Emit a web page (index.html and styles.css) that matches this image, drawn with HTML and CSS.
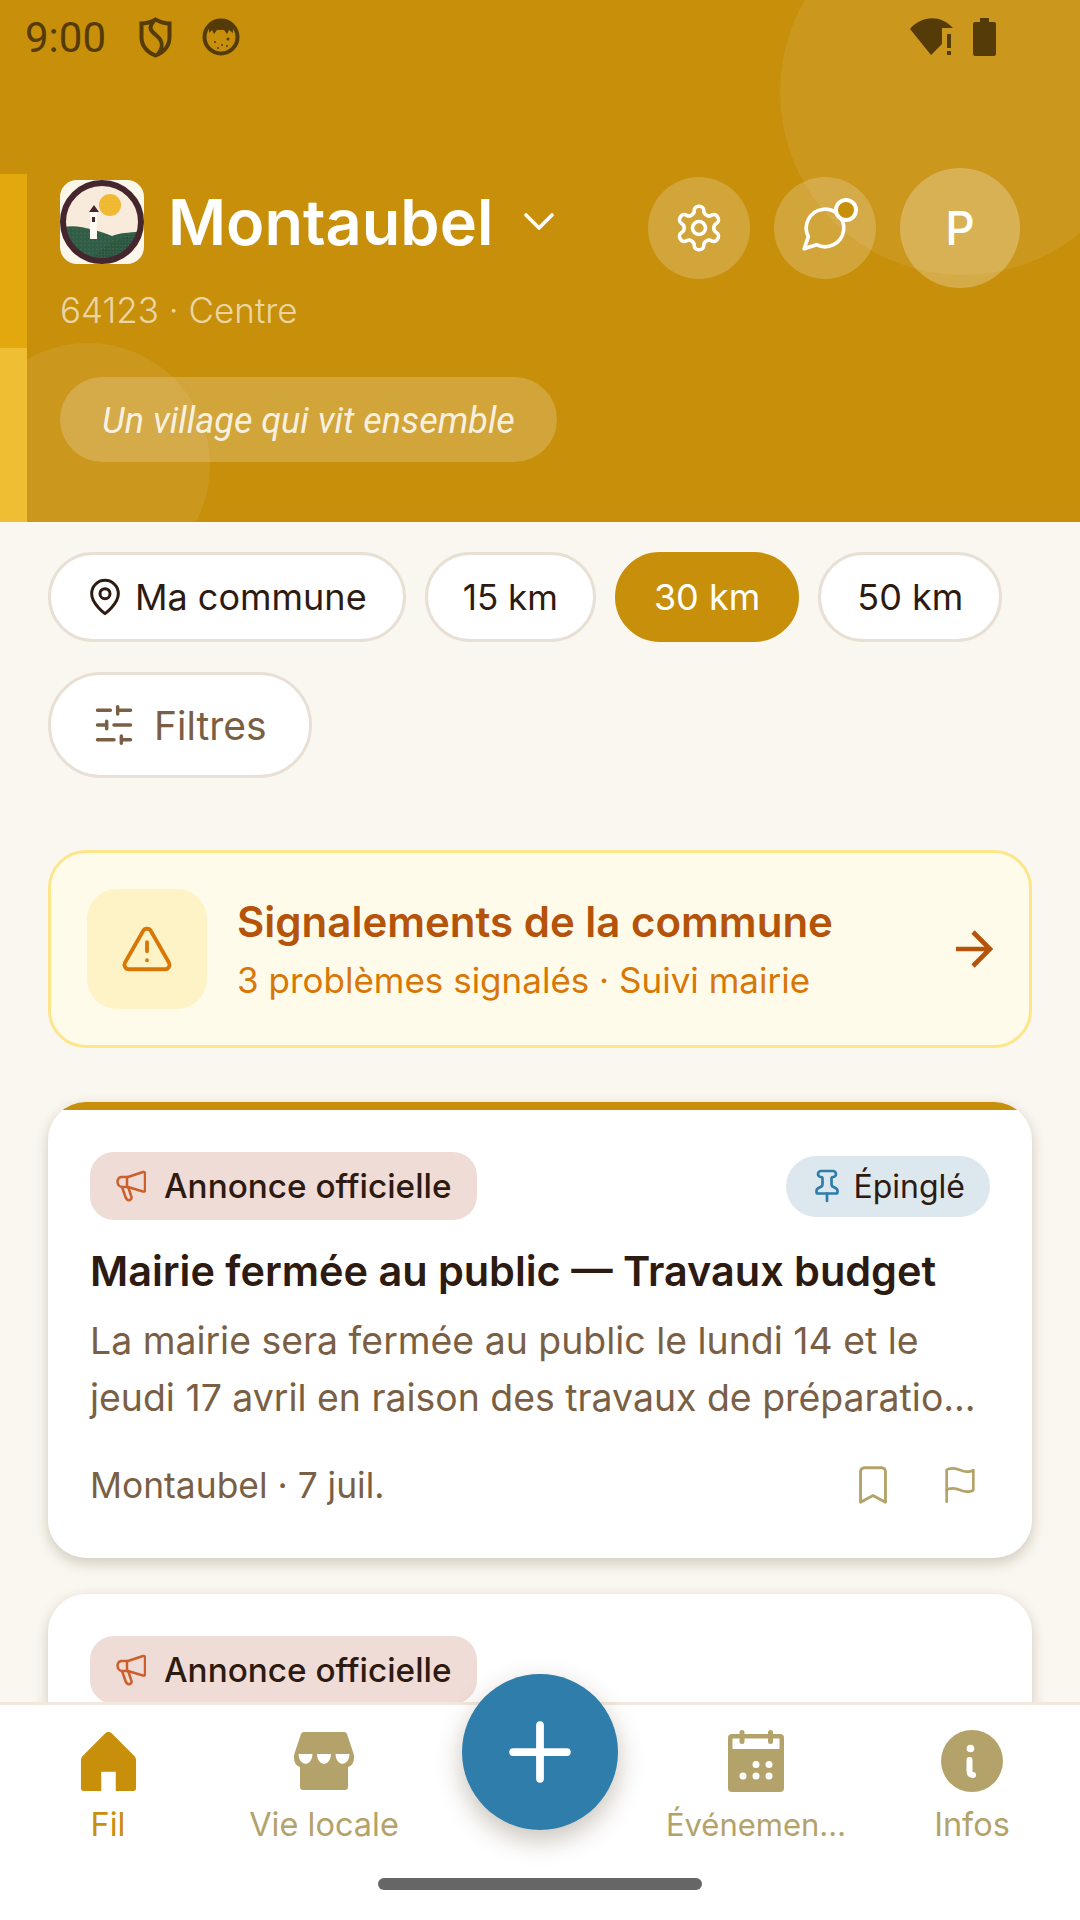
FILE: index.html
```html
<!DOCTYPE html>
<html lang="fr">
<head>
<meta charset="utf-8">
<title>Montaubel</title>
<link rel="stylesheet" href="styles.css">
</head>
<body>
<div class="screen">
  <header class="header">
    <div class="blob blob-top"></div>
    <div class="blob blob-bottom"></div>
    <div class="stripes"><div class="stripe-a"></div><div class="stripe-b"></div></div>
    <div class="status">
      <span class="clock">9:00</span>
      <svg class="st-shield" viewBox="0 0 33 41"><path class="st-line" d="M16.5 2.5 C21 5 26 6.500 30.500 6.500 V20 C30.500 29 25 35 16.500 38.500 C8 35 2.500 29 2.500 20 V6.500 C7 6.500 12 5 16.500 2.500 Z"/><path class="st-line" d="M15 4 C8 11 13 15 18 19 C24 24 24 31 19 37"/></svg>
      <svg class="st-face" viewBox="0 0 38 38"><circle class="st-line" cx="19" cy="19" r="16.500"/><path class="st-fill" d="M7 8 C12 1 26 1 31 8 L31 15 L27 12 L25 16 L22 12 H15 L12 16 L10 12 L7 15 Z"/><circle class="st-fill" cx="13" cy="24" r="1"/><circle class="st-fill" cx="20" cy="27" r="1"/><circle class="st-fill" cx="26" cy="21" r="1.500"/><circle class="st-fill" cx="16" cy="30" r="1"/><circle class="st-fill" cx="25" cy="28" r="1"/></svg>
      <span class="status-gap"></span>
      <svg class="st-wifi" viewBox="0 0 43 38"><path class="st-fill" d="M0 11 C12 -3 31 -3 43 10 H32 V26 L21 37 Z"/><rect class="st-fill" x="37" y="16" width="4" height="14"/><rect class="st-fill" x="37" y="33" width="4" height="4"/></svg>
      <svg class="st-batt" viewBox="0 0 23 38"><path class="st-fill" d="M7 0 H16 V4 H21 Q23 4 23 6 V36 Q23 38 21 38 H2 Q0 38 0 36 V6 Q0 4 2 4 H7 Z"/></svg>
    </div>
    <div class="head-main">
      <div class="head-left">
        <div class="title-row">
          <svg class="logo" viewBox="0 0 84 84">
            <defs>
              <clipPath id="lc"><circle cx="42" cy="42" r="38"/></clipPath>
              <pattern id="dotsA" width="4" height="4" patternUnits="userSpaceOnUse"><circle cx="1" cy="1" r=".5" fill="#8a6a5a"/></pattern>
              <pattern id="dotsB" width="3" height="3" patternUnits="userSpaceOnUse"><circle cx="1" cy="1" r=".6" fill="#15261d"/></pattern>
              <pattern id="dotsC" width="3" height="3" patternUnits="userSpaceOnUse"><circle cx="1" cy="1" r=".4" fill="#d99a3a"/></pattern>
            </defs>
            <rect class="logo-bg" width="84" height="84" rx="17"/>
            <circle class="logo-sky" cx="42" cy="42" r="39"/>
            <g clip-path="url(#lc)">
              <path class="logo-hill" d="M0 48 C10 45 20 46 34 50 C42 52 47 54 52 56 C60 53 70 52 84 52 V84 H0 Z"/>
              <path class="logo-dots-a" d="M0 48 C10 45 20 46 34 50 C42 52 47 54 52 56 C60 53 70 52 84 52 V84 H0 Z"/>
              <path class="logo-dots-b" d="M34 78 C40 66 58 58 84 52 V84 H34 Z"/>
            </g>
            <circle class="logo-sun" cx="50" cy="25" r="11"/>
            <circle class="logo-sun-dots" cx="50" cy="25" r="11"/>
            <rect class="logo-tower" x="30" y="32" width="7" height="27"/>
            <path class="logo-dark" d="M34 25 L39 32 H29 Z"/>
            <rect class="logo-dark" x="32" y="37" width="3" height="5"/>
            <circle class="logo-ring" cx="42" cy="42" r="39"/>
          </svg>
          <h1 class="town">Montaubel</h1>
          <svg class="chevron" viewBox="0 0 32 22"><path d="M3 4 L16 17 L29 4"/></svg>
        </div>
        <div class="postal">64123 · Centre</div>
        <div class="tagline">Un village qui vit ensemble</div>
      </div>
      <div class="actions">
        <div class="round-btn">
          <svg class="ic-white ic-gear" viewBox="0 0 24 24"><path d="M12.220 2h-.44a2 2 0 0 0-2 2v.18a2 2 0 0 1-1 1.730l-.43.25a2 2 0 0 1-2 0l-.15-.08a2 2 0 0 0-2.730.73l-.22.38a2 2 0 0 0 .73 2.730l.15.1a2 2 0 0 1 1 1.720v.51a2 2 0 0 1-1 1.740l-.15.09a2 2 0 0 0-.73 2.730l.22.38a2 2 0 0 0 2.730.73l.15-.08a2 2 0 0 1 2 0l.43.25a2 2 0 0 1 1 1.730V20a2 2 0 0 0 2 2h.44a2 2 0 0 0 2-2v-.18a2 2 0 0 1 1-1.730l.43-.25a2 2 0 0 1 2 0l.15.08a2 2 0 0 0 2.730-.73l.22-.39a2 2 0 0 0-.73-2.730l-.15-.08a2 2 0 0 1-1-1.740v-.5a2 2 0 0 1 1-1.740l.15-.09a2 2 0 0 0 .73-2.730l-.22-.38a2 2 0 0 0-2.730-.73l-.15.08a2 2 0 0 1-2 0l-.43-.25a2 2 0 0 1-1-1.730V4a2 2 0 0 0-2-2z"/><circle cx="12" cy="12" r="3"/></svg>
        </div>
        <div class="round-btn">
          <svg class="ic-white ic-chat" viewBox="0 0 24 24"><path d="M7.900 20A9 9 0 1 0 4 16.100L2 22Z"/></svg>
          <span class="notif"></span>
        </div>
        <div class="avatar">P</div>
      </div>
    </div>
  </header>

  <main class="content">
    <div class="chips">
      <div class="chip chip-place">
        <svg class="ic-pin" viewBox="0 0 24 24"><path d="M20 10c0 6-8 12-8 12s-8-6-8-12a8 8 0 0 1 16 0Z"/><circle cx="12" cy="10" r="3"/></svg>
        Ma commune
      </div>
      <div class="chip chip-near">15 km</div>
      <div class="chip chip-on">30 km</div>
      <div class="chip">50 km</div>
      <div class="chip chip-filter">
        <svg class="ic-sliders" viewBox="0 0 24 24"><path d="M21 4h-7M10 4H3M21 12h-9M8 12H3M21 20h-5M12 20H3M14 2v4M8 10v4M16 18v4"/></svg>
        Filtres
      </div>
    </div>

    <section class="alert">
      <div class="alert-icon">
        <svg class="ic-warn" viewBox="0 0 24 24"><path d="m21.730 18-8-14a2 2 0 0 0-3.480 0l-8 14A2 2 0 0 0 4 21h16a2 2 0 0 0 1.730-3"/><path d="M12 9v4M12 17h.01"/></svg>
      </div>
      <div class="alert-text">
        <div class="alert-title">Signalements de la commune</div>
        <div class="alert-sub">3 problèmes signalés · Suivi mairie</div>
      </div>
      <svg class="ic-arrow" viewBox="0 0 24 24"><path d="M3 12h17M11.500 3.500L20 12l-8.500 8.500"/></svg>
    </section>

    <article class="card">
      <div class="card-band"></div>
      <div class="card-body">
        <div class="tags">
          <div class="tag">
            <svg class="ic-mega" viewBox="0 0 30 32"><path d="M5 7 H12 L27 2 Q29 1.500 29 3.500 V20 Q29 22 27 21.500 L12 17 H7 Q2 17 1.500 12 Q1.500 8 5 7 Z"/><path d="M11 7 V17"/><path d="M6 17 L9.500 27 Q11 31 14 30 Q16.500 28.500 15 25.500 L12.500 18"/></svg>
            Annonce officielle
          </div>
          <div class="pinned">
            <svg class="ic-tack" viewBox="0 0 24 24"><path d="M12 17v5"/><path d="M9 10.760a2 2 0 0 1-1.110 1.790l-1.780.9A2 2 0 0 0 5 15.240V16a1 1 0 0 0 1 1h12a1 1 0 0 0 1-1v-.76a2 2 0 0 0-1.110-1.790l-1.780-.9A2 2 0 0 1 15 10.760V7a1 1 0 0 1 1-1 2 2 0 0 0 0-4H8a2 2 0 0 0 0 4 1 1 0 0 1 1 1z"/></svg>
            Épinglé
          </div>
        </div>
        <h2 class="post-title">Mairie fermée au public — Travaux budget</h2>
        <p class="post-text">La mairie sera fermée au public le lundi 14 et le jeudi 17 avril en raison des travaux de préparatio…</p>
        <div class="post-foot">
          <span class="post-meta">Montaubel · 7 juil.</span>
          <div class="post-actions">
            <svg class="ic-bookmark" viewBox="0 0 24 24"><path d="M18.500 21l-6.500-3.500L5.500 21V5a2 2 0 0 1 2-2h9a2 2 0 0 1 2 2z"/></svg>
            <svg class="ic-flag" viewBox="0 0 24 24"><path d="M4 15s1-1 4-1 5 2 8 2 4-1 4-1V3s-1 1-4 1-5-2-8-2-4 1-4 1z"/><path d="M4 22v-7"/></svg>
          </div>
        </div>
      </div>
    </article>

    <article class="card card-next">
      <div class="card-body">
        <div class="tags">
          <div class="tag">
            <svg class="ic-mega" viewBox="0 0 30 32"><path d="M5 7 H12 L27 2 Q29 1.500 29 3.500 V20 Q29 22 27 21.500 L12 17 H7 Q2 17 1.500 12 Q1.500 8 5 7 Z"/><path d="M11 7 V17"/><path d="M6 17 L9.500 27 Q11 31 14 30 Q16.500 28.500 15 25.500 L12.500 18"/></svg>
            Annonce officielle
          </div>
        </div>
      </div>
    </article>
  </main>

  <nav class="nav">
    <div class="nav-item nav-on">
      <div class="nav-icon"><svg class="i-home" viewBox="0 0 57 61"><path d="M28.500 0 Q26.500 0 25 1.500 L1.500 25 Q0 26.500 0 29 V58 Q0 61 3 61 H21 V41 H36 V61 H54 Q57 61 57 58 V29 Q57 26.500 55.500 25 L32 1.500 Q30.500 0 28.500 0 Z"/></svg></div>
      <span class="nav-label">Fil</span>
    </div>
    <div class="nav-item">
      <div class="nav-icon"><svg class="i-store" viewBox="0 0 60 58"><path class="fill-muted" d="M7 2 Q7.500 0 10 0 H50 Q52.500 0 53 2 L60 23 V26 Q60 33 54 35 V55 Q54 58 51 58 H9 Q6 58 6 55 V35 Q0 33 0 26 V23 Z"/><path class="fill-white" d="M4.500 22 H18.500 A7 10 0 0 1 4.500 22 Z"/><path class="fill-white" d="M23 22 H37 A7 10 0 0 1 23 22 Z"/><path class="fill-white" d="M41.500 22 H55.500 A7 10 0 0 1 41.500 22 Z"/></svg></div>
      <span class="nav-label">Vie locale</span>
    </div>
    <div class="nav-item"></div>
    <div class="nav-item">
      <div class="nav-icon"><svg class="i-cal" viewBox="0 0 56 62"><rect class="fill-muted" y="4" width="56" height="58" rx="4"/><rect class="fill-white" x="4.500" y="8.500" width="47" height="10.500"/><rect class="fill-muted" x="11.500" width="5" height="14" rx="2.500"/><rect class="fill-muted" x="40" width="5" height="14" rx="2.500"/><circle class="fill-white" cx="28" cy="34.500" r="3.500"/><circle class="fill-white" cx="41" cy="34.500" r="3.500"/><circle class="fill-white" cx="15" cy="46" r="3.500"/><circle class="fill-white" cx="28" cy="46" r="3.500"/><circle class="fill-white" cx="41" cy="46" r="3.500"/></svg></div>
      <span class="nav-label nav-long">Événemen…</span>
    </div>
    <div class="nav-item">
      <div class="nav-icon"><svg class="i-info" viewBox="0 0 62 62"><circle class="fill-muted" cx="31" cy="31" r="31"/><circle class="fill-white" cx="29.500" cy="18.500" r="3.800"/><path class="stroke-white" d="M28.500 30 V41 Q28.500 45 32 45"/></svg></div>
      <span class="nav-label">Infos</span>
    </div>
  </nav>
  <div class="fab"><svg class="i-plus" viewBox="0 0 60 60"><path d="M30 4 V56 M4 30 H56"/></svg></div>
  <div class="home-bar"></div>
</div>
</body>
</html>
```

FILE: styles.css
```css
* { box-sizing: border-box; }
html, body { margin: 0; padding: 0; }
body { background: #faf7f0; font-family: "Inter", "Liberation Sans", sans-serif; color: #2d1a10; }
.screen { position: relative; width: 1080px; height: 1920px; overflow: hidden; background: #faf7f0; }

/* header */
.header { position: relative; height: 522px; background: #c78f0a; overflow: hidden; }
.blob { position: absolute; border-radius: 50%; background: rgba(255,255,255,.08); }
.blob-top { left: 780px; top: -91px; width: 366px; height: 366px; }
.blob-bottom { left: -34px; top: 343px; width: 244px; height: 244px; }
.stripes { position: absolute; left: 0; top: 174px; width: 27px; height: 348px; display: flex; flex-direction: column; }
.stripe-a { flex: 1; background: #e2a80e; }
.stripe-b { flex: 1; background: #f0be32; }

.status { position: relative; display: flex; align-items: center; height: 74px; padding: 0 84px 0 25px; }
.clock { font-family: "Roboto", sans-serif; font-size: 42px; color: #553b08; width: 114px; }
.status-gap { flex: 1; }
.st-line { fill: none; stroke: #553b08; stroke-width: 4; }
.st-fill { fill: #553b08; }
.st-shield { width: 33px; height: 41px; margin-right: 30px; }
.st-face { width: 38px; height: 38px; }
.st-wifi { width: 43px; height: 38px; margin-right: 20px; }
.st-batt { width: 23px; height: 38px; }

.head-main { position: relative; display: flex; justify-content: space-between; padding: 94px 60px 0; }
.head-left { padding-top: 12px; }
.title-row { display: flex; align-items: center; height: 84px; }
.logo { width: 84px; height: 84px; margin-right: 24px; }
.logo-bg { fill: #fbf6ea; }
.logo-sky { fill: #f8ebdc; }
.logo-hill { fill: #2f5e46; }
.logo-dots-a { fill: url(#dotsA); }
.logo-dots-b { fill: url(#dotsB); }
.logo-sun { fill: #f0bb33; }
.logo-sun-dots { fill: url(#dotsC); }
.logo-tower { fill: #fdfaf3; }
.logo-dark { fill: #45262f; }
.logo-ring { fill: none; stroke: #45262f; stroke-width: 6; }
.town { margin: 0; font-size: 63px; font-weight: 600; color: #fff; line-height: 84px; }
.chevron { width: 32px; height: 22px; margin-left: 30px; }
.chevron path { fill: none; stroke: #fff; stroke-width: 3.6; stroke-linecap: round; stroke-linejoin: round; }
.postal { margin-top: 26px; font-size: 35px; font-weight: 300; line-height: 40px; color: rgba(255,255,255,.65); }
.tagline { margin-top: 47px; height: 85px; width: 497px; padding-top: 3px; display: flex; align-items: center; justify-content: center; border-radius: 43px; background: rgba(255,255,255,.2); font-family: "Roboto", sans-serif; font-style: italic; font-size: 36px; color: rgba(255,255,255,.85); }
.actions { display: flex; align-items: center; gap: 24px; height: 120px; }
.round-btn { position: relative; width: 102px; height: 102px; border-radius: 50%; background: rgba(255,255,255,.2); display: flex; align-items: center; justify-content: center; }
.ic-white { fill: none; stroke: #fff; stroke-linecap: round; stroke-linejoin: round; }
.ic-gear { width: 52px; height: 52px; stroke-width: 1.650; }
.ic-chat { width: 50px; height: 50px; stroke-width: 1.750; }
.notif { position: absolute; right: 18px; top: 21px; width: 24px; height: 24px; border-radius: 50%; background: #c78f0a; border: 4px solid #fff; }
.avatar { width: 120px; height: 120px; border-radius: 50%; background: rgba(255,255,255,.25); display: flex; align-items: center; justify-content: center; font-size: 46px; font-weight: 500; color: #fff; }

/* content */
.content { padding: 30px 48px 0; }
.chips { display: flex; flex-wrap: wrap; gap: 30px 19px; }
.chip { height: 90px; padding: 0 36px; display: flex; align-items: center; gap: 10px; background: #fff; border: 3px solid #e8dfd5; border-radius: 45px; font-size: 36px; color: #2d1a10; }
.chip-place { padding: 0 36px 0 38px; }
.chip-near { padding: 0 35px; font-size: 35px; }
.chip-on { background: #c78f0a; border-color: #c78f0a; color: #fff; }
.chip-filter { height: 106px; border-radius: 53px; color: #7a5f45; gap: 18px; padding: 0 42px 0 41px; font-size: 39px; }
.ic-pin { width: 40px; height: 40px; fill: none; stroke: #2d1a10; stroke-width: 1.8; stroke-linecap: round; stroke-linejoin: round; margin-left: -4px; }
.ic-sliders { width: 44px; height: 44px; fill: none; stroke: #7a5f45; stroke-width: 1.9; stroke-linecap: round; }

.alert { margin-top: 72px; height: 198px; padding: 0 31px 0 36px; display: flex; align-items: center; background: #fffbeb; border: 3px solid #fde68a; border-radius: 38px; }
.alert-icon { width: 120px; height: 120px; border-radius: 30px; background: #fef3c7; display: flex; align-items: center; justify-content: center; margin-right: 30px; }
.ic-warn { width: 54px; height: 54px; fill: none; stroke: #d97706; stroke-width: 1.7; stroke-linecap: round; stroke-linejoin: round; }
.alert-text { flex: 1; }
.alert-title { font-size: 42px; font-weight: 600; color: #b45309; line-height: 46px; }
.alert-sub { margin-top: 15px; font-size: 35px; color: #d97706; line-height: 40px; }
.ic-arrow { width: 48px; height: 48px; fill: none; stroke: #b45309; stroke-width: 2.300; }

.card { margin-top: 54px; background: #fff; border-radius: 38px; overflow: hidden; box-shadow: 0 5px 14px rgba(60,40,10,.22); }
.card-band { height: 8px; background: #c78f0a; }
.card-body { padding: 42px 42px 50px; }
.card-next { margin-top: 36px; }
.tags { display: flex; justify-content: space-between; align-items: center; height: 68px; }
.tag { height: 68px; padding: 0 25px 0 26px; display: flex; align-items: center; gap: 18px; background: #f0dcd6; border-radius: 24px; font-size: 33.300px; font-weight: 500; color: #2d1a10; }
.ic-mega { width: 30px; height: 32px; fill: none; stroke: #cc5f2b; stroke-width: 2.500; stroke-linejoin: round; stroke-linecap: round; }
.pinned { height: 61px; padding: 0 25px 0 23px; display: flex; align-items: center; gap: 8px; background: #dde7ee; border-radius: 31px; font-size: 32px; color: #2d1a10; }
.ic-tack { width: 36px; height: 36px; fill: none; stroke: #2e7dab; stroke-width: 1.8; stroke-linecap: round; stroke-linejoin: round; }
.post-title { margin: 21px 0 0; font-size: 41.400px; font-weight: 600; line-height: 60px; color: #2d1a10; }
.post-text { margin: 11px 0 0; font-size: 37.400px; line-height: 57px; color: #7a5f45; }
.post-foot { margin-top: 36px; height: 46px; display: flex; align-items: center; justify-content: space-between; }
.post-meta { font-size: 35.400px; color: #7a5f45; }
.post-actions { display: flex; align-items: center; gap: 44px; padding-right: 10px; }
.ic-bookmark { width: 46px; height: 46px; fill: none; stroke: #b3a36a; stroke-width: 1.5; stroke-linejoin: round; stroke-linecap: round; }
.ic-flag { width: 40px; height: 40px; fill: none; stroke: #b3a36a; stroke-width: 1.6; stroke-linejoin: round; stroke-linecap: round; }

/* bottom navigation */
.nav { position: absolute; left: 0; right: 0; bottom: 0; height: 218px; padding-top: 24px; display: grid; grid-template-columns: repeat(5, 216px); background: #fff; border-top: 3px solid #f2e8dd; }
.nav-item { display: flex; flex-direction: column; align-items: center; color: #b3a36a; }
.nav-on { color: #c78f0a; }
.nav-icon { height: 64px; display: flex; align-items: center; }
.nav-label { margin-top: 12px; font-size: 32.500px; line-height: 40px; white-space: nowrap; }
.nav-long { font-size: 31px; }
.i-home { width: 57px; height: 59px; fill: #c78f0a; }
.i-store { width: 60px; height: 58px; }
.i-cal { width: 56px; height: 62px; }
.i-info { width: 62px; height: 62px; }
.fill-muted { fill: #b3a36a; }
.fill-white { fill: #fff; }
.stroke-white { fill: none; stroke: #fff; stroke-width: 6; stroke-linecap: round; }
.fab { position: absolute; left: 462px; top: 1674px; width: 156px; height: 156px; border-radius: 50%; background: #2e7dab; display: flex; align-items: center; justify-content: center; box-shadow: 0 10px 26px rgba(60,40,10,.28); }
.i-plus { width: 62px; height: 62px; fill: none; stroke: #fff; stroke-width: 7.500; stroke-linecap: round; }
.home-bar { position: absolute; left: 378px; top: 1878px; width: 324px; height: 12px; border-radius: 6px; background: #666; }
```
